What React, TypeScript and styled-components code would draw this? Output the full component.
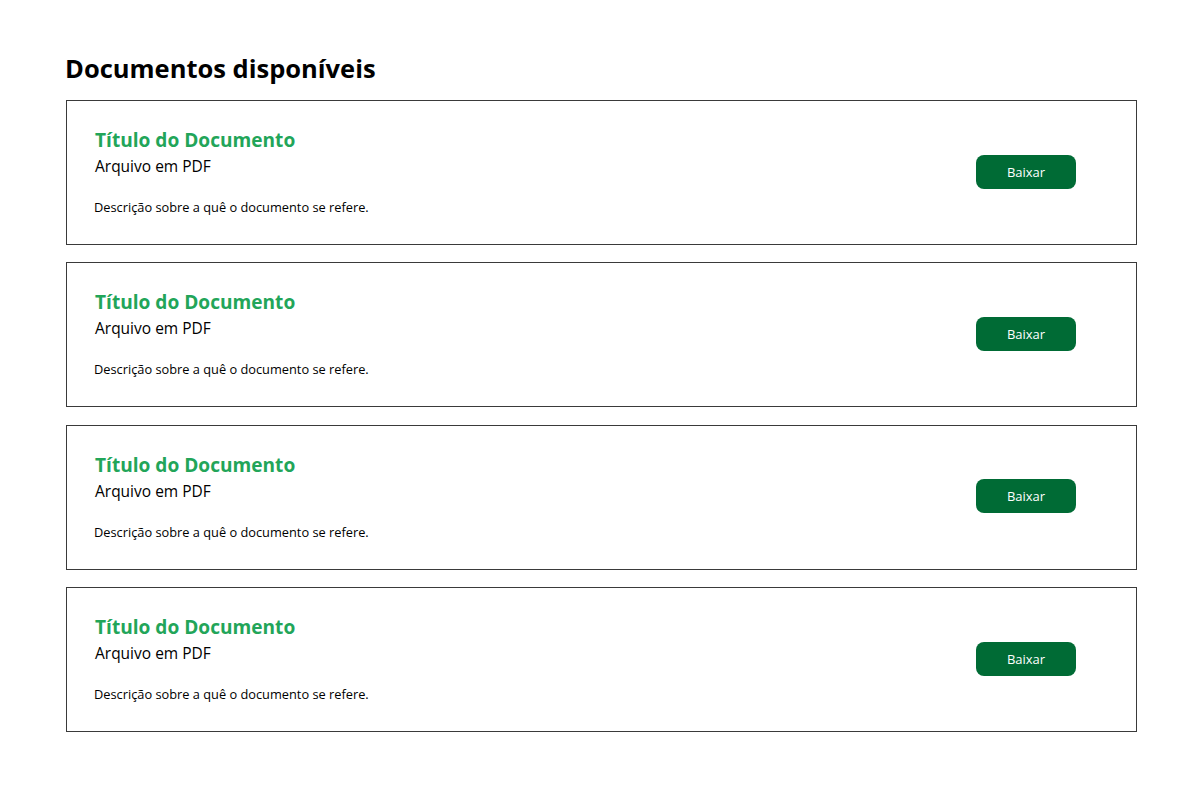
import React from "react";
import styled, { createGlobalStyle } from "styled-components";

const Global = createGlobalStyle`
  html, body { margin: 0; padding: 0; background: #fff; }
  body { font-family: "Open Sans", "Liberation Sans", sans-serif; color: #000; }
`;

const Page = styled.main`
  padding: 52px 66px 0 66px;
  width: 1071px;
`;

const Heading = styled.h1`
  margin: 0 0 16px -1px;
  font-size: 25.5px;
  line-height: 32px;
  font-weight: 700;
`;

const List = styled.div`
  display: flex;
  flex-direction: column;
  gap: 17.4px;
`;

const Card = styled.section`
  box-sizing: border-box;
  height: 145px;
  border: 1px solid #3a3a3a;
  display: flex;
  align-items: center;
  justify-content: space-between;
  padding: 0 60px 0 28px;
`;

const Info = styled.div`
  display: flex;
  flex-direction: column;
  align-self: flex-start;
  padding-top: 27px;
`;

const Title = styled.h2`
  margin: 0;
  font-size: 19.1px;
  line-height: 24px;
  font-weight: 700;
  color: #22a559;
`;

const Format = styled.div`
  font-size: 15.5px;
  line-height: 20px;
  margin-top: 4px;
`;

const Description = styled.p`
  margin: 22px 0 0 -1px;
  font-size: 12.8px;
  line-height: 18px;
`;

const Button = styled.button`
  width: 100px;
  height: 34px;
  margin-top: -2px;
  border: none;
  border-radius: 8px;
  background: #006b35;
  color: #fff;
  font-family: "Open Sans", "Liberation Sans", sans-serif;
  font-size: 13px;
  cursor: pointer;
`;

const docs = [1, 2, 3, 4];

export default function App() {
  return (
    <>
      <Global />
      <Page>
        <Heading>Documentos disponíveis</Heading>
        <List>
          {docs.map((d) => (
            <Card key={d}>
              <Info>
                <Title>Título do Documento</Title>
                <Format>Arquivo em PDF</Format>
                <Description>Descrição sobre a quê o documento se refere.</Description>
              </Info>
              <Button>Baixar</Button>
            </Card>
          ))}
        </List>
      </Page>
    </>
  );
}
